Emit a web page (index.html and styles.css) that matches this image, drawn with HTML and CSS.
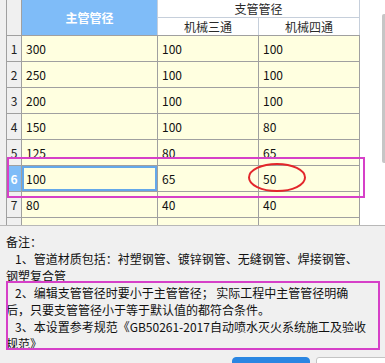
FILE: index.html
```html
<!DOCTYPE html>
<html lang="zh-CN">
<head>
<meta charset="utf-8">
<title>管径设置</title>
<link rel="stylesheet" href="styles.css">
</head>
<body>
<div class="grid-area">
  <div class="gutter"></div>
  <div class="sheet">
    <div class="head">
      <div class="corner"></div>
      <div class="h-main">主管管径</div>
      <div class="h-group">支管管径</div>
      <div class="h-sub">机械三通</div>
      <div class="h-sub">机械四通</div>
    </div>
    <div class="row"><div class="rn">1</div><div class="c">300</div><div class="c">100</div><div class="c">100</div></div>
    <div class="row"><div class="rn">2</div><div class="c">250</div><div class="c">100</div><div class="c">100</div></div>
    <div class="row"><div class="rn">3</div><div class="c">200</div><div class="c">100</div><div class="c">100</div></div>
    <div class="row"><div class="rn">4</div><div class="c">150</div><div class="c">100</div><div class="c">80</div></div>
    <div class="row"><div class="rn">5</div><div class="c">125</div><div class="c">80</div><div class="c">65</div></div>
    <div class="row"><div class="rn rn-sel">6</div><div class="c c-sel">100</div><div class="c">65</div><div class="c">50</div></div>
    <div class="row"><div class="rn">7</div><div class="c">80</div><div class="c">40</div><div class="c">40</div></div>
    <div class="row row-part"><div class="rn"></div><div class="c"></div><div class="c"></div><div class="c"></div></div>
  </div>
  <div class="fill"></div>
  <div class="thumb"></div>
</div>

<div class="notes">
  <p class="line">备注：</p>
  <p class="item">1、管道材质包括：衬塑钢管、镀锌钢管、无缝钢管、焊接钢管、<br>钢塑复合管</p>
  <p class="item">2、编辑支管管径时要小于主管管径；&nbsp;实际工程中主管管径明确<br>后，只要支管管径小于等于默认值的都符合条件。</p>
  <p class="item">3、本设置参考规范《GB50261-2017自动喷水灭火系统施工及验收<br>规范》</p>
</div>

<div class="footer">
  <button class="btn btn-primary" aria-label="确定"></button>
  <button class="btn" aria-label="取消"></button>
</div>

<div class="mark mark-row"></div>
<div class="mark mark-note"></div>
<svg class="mark-ellipse" width="58" height="29" viewBox="0 0 58 29"><ellipse cx="29" cy="14.5" rx="28" ry="13.5" fill="none" stroke="#e3262b" stroke-width="2"/></svg>
</body>
</html>
```

FILE: styles.css
```css
* { box-sizing: border-box; }
html, body { margin: 0; padding: 0; }
html { height: 363px; overflow: hidden; }
body {
  position: relative;
  width: 385px;
  height: 363px;
  overflow: hidden;
  background: #f0f0f0;
  font-family: "Noto Sans CJK SC", "Microsoft YaHei", sans-serif;
  font-size: 12px;
  color: #111;
}

.grid-area {
  position: relative;
  display: flex;
  height: 226px;
  background: #fff;
  border-bottom: 1px solid #b8b8b8;
  overflow: hidden;
}
.gutter { width: 6px; background: #f0f0f0; }
.sheet {
  width: 354px;
  border-left: 1px solid #a0a0a0;
}
.fill { flex: 1; background: #fff; }
.thumb {
  position: absolute;
  top: 14px;
  right: 0;
  width: 3px;
  height: 149px;
  background: #c6c6c6;
  border-radius: 2px 0 0 2px;
}

.head {
  display: grid;
  grid-template-columns: 15px 136px 101px 101px;
  grid-template-rows: 18px 17px;
  height: 36px;
  border-bottom: 1px solid #a0a0a0;
}
.corner {
  grid-row: 1 / 3;
  grid-column: 1;
  background: #f0f0f0;
  border-right: 1px solid #a0a0a0;
}
.h-main {
  grid-row: 1 / 3;
  grid-column: 2;
  background: #7fbcf8;
  border-right: 1px solid #c6cfdb;
  color: #fff;
  font-weight: bold;
  display: flex;
  align-items: center;
  justify-content: center;
}
.h-group {
  grid-row: 1;
  grid-column: 3 / 5;
  border-right: 1px solid #c6cfdb;
  border-bottom: 1px solid #c6cfdb;
  display: flex;
  align-items: center;
  justify-content: center;
  color: #2a2a2a;
}
.h-sub {
  grid-row: 2;
  border-right: 1px solid #c6cfdb;
  display: flex;
  align-items: center;
  justify-content: center;
  color: #2a2a2a;
}

.row {
  display: grid;
  grid-template-columns: 15px 136px 101px 101px;
  height: 26px;
  border-bottom: 1px solid #a0a0a0;
}
.row-part { height: 8px; border-bottom: none; }
.rn {
  background: #f0f0f0;
  border-right: 1px solid #a0a0a0;
  text-align: center;
  line-height: 25px;
  color: #222;
}
.rn-sel {
  background: #7fbcf8;
  color: #fff;
  font-weight: bold;
}
.c {
  background: #ffffe0;
  border-right: 1px solid #a0a0a0;
  padding-left: 4px;
  line-height: 25px;
  color: #111;
}
.c-sel { box-shadow: inset 0 0 0 2px #64a8ea; }

.notes {
  height: 126px;
  padding: 7px 0 0 6px;
  line-height: 17px;
  white-space: nowrap;
}
.notes p { margin: 0; }
.item { text-indent: 9px; }

.footer {
  display: flex;
  gap: 6px;
  height: 6px;
  padding-left: 232px;
  margin-top: 5px;
  overflow: hidden;
}
.btn {
  flex: none;
  width: 78px;
  height: 26px;
  border: 1px solid #c4c4c4;
  border-radius: 3px;
  background: #fff;
  padding: 0;
}
.btn-primary {
  background: #2b86e2;
  border-color: #2b86e2;
  border-radius: 4px;
}

.mark {
  position: absolute;
  border: 2px solid #d640c8;
}
.mark-row { left: 7px; top: 157px; width: 358px; height: 41px; }
.mark-note { left: 6px; top: 281px; width: 374px; height: 69px; }
.mark-ellipse { position: absolute; left: 248px; top: 163px; }
```
